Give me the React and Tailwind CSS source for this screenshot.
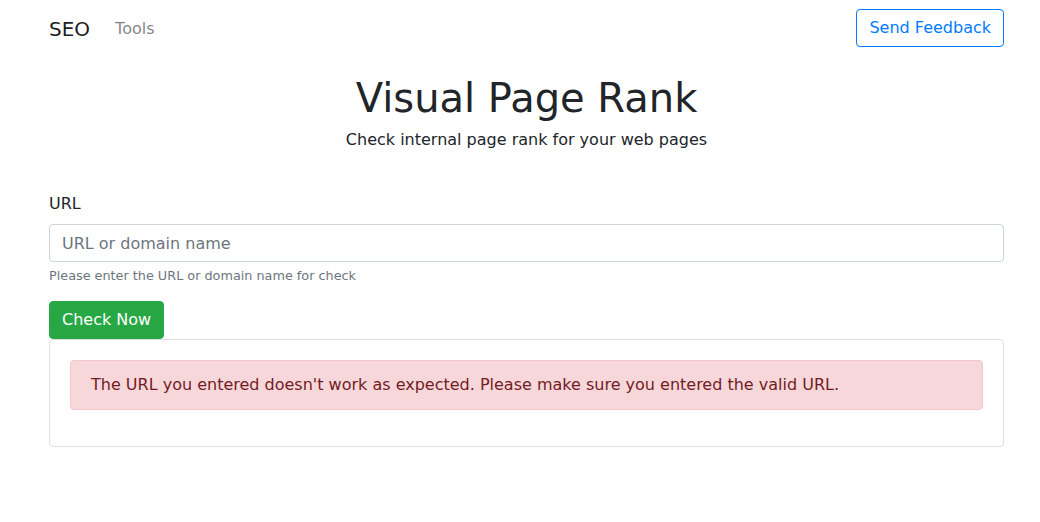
export default function App() {
  return (
    <div className="min-h-[522px] bg-white text-[#212529] font-['DejaVu_Sans',sans-serif] text-base leading-6">
      <div className="ml-[49px] w-[955px]">
        {/* Navbar */}
        <nav className="flex items-center justify-between pt-[9px] pb-2">
          <div className="flex items-center pt-[2px]">
            <a href="#" className="text-[20px] leading-[30px] text-black/90 mr-4">
              SEO
            </a>
            <a href="#" className="pl-[9px] pr-2 text-black/50">
              Tools
            </a>
          </div>
          <button className="h-[38px] px-3 border border-[#007bff] rounded text-[#007bff] bg-white">
            Send Feedback
          </button>
        </nav>

        {/* Header */}
        <div className="text-center mt-[19px]">
          <h1 className="text-[40px] leading-[48px] font-normal">Visual Page Rank</h1>
          <p className="mt-[6px]">Check internal page rank for your web pages</p>
        </div>

        {/* Form */}
        <form className="mt-[40px]" onSubmit={(e) => e.preventDefault()}>
          <label className="block mb-2">URL</label>
          <input
            type="text"
            placeholder="URL or domain name"
            className="block w-full h-[38px] px-3 border border-[#ced4da] rounded placeholder:text-[#6c757d] outline-none"
          />
          <small className="block mt-1 text-[12.8px] leading-[19.2px] text-[#6c757d]">
            Please enter the URL or domain name for check
          </small>
          <button className="mt-4 h-[38px] px-3 rounded bg-[#28a745] border border-[#28a745] text-white">
            Check Now
          </button>
        </form>

        {/* Result */}
        <div className="border border-black/[0.125] rounded p-5">
          <div className="mb-4 px-5 py-3 bg-[#f8d7da] border border-[#f5c6cb] rounded text-[#721c24]">
            The URL you entered doesn't work as expected. Please make sure you entered the valid URL.
          </div>
        </div>
      </div>
    </div>
  );
}
